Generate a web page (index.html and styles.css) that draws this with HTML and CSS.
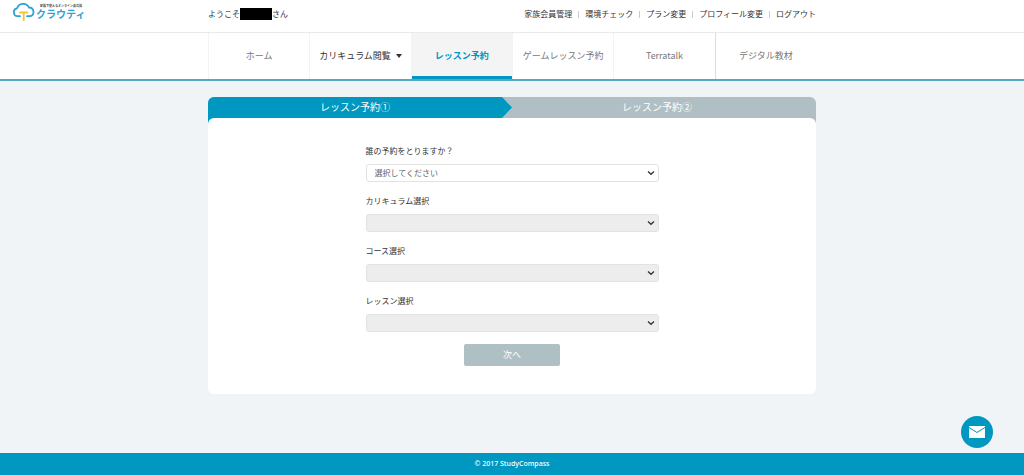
FILE: index.html
```html
<!DOCTYPE html>
<html lang="ja">
<head>
<meta charset="utf-8">
<meta name="viewport" content="width=device-width, initial-scale=1">
<title>レッスン予約 | クラウティ</title>
<link rel="stylesheet" href="styles.css">
</head>
<body>
<header class="header">
  <a class="logo" href="#">
    <svg class="logo-mark" viewBox="0 0 24 18" aria-hidden="true">
      <path d="M8 13.200H5.500A4 4 0 0 1 5 5.300A6.500 6.500 0 0 1 17 4.500A4.400 4.400 0 0 1 18 13.200H15" fill="none" stroke="#2ba3d4" stroke-width="1.800" stroke-linecap="round"/>
      <path d="M8 9.500H15.500M11.700 9.500V17" fill="none" stroke="#f3c530" stroke-width="1.800" stroke-linecap="round"/>
    </svg>
    <span class="logo-text">
      <span class="logo-tagline">家族で使えるオンライン英会話</span>
      <span class="logo-name">クラウティ</span>
    </span>
  </a>
  <div class="header-main">
    <p class="welcome">ようこそ<span class="masked"></span>さん</p>
    <ul class="links">
      <li><a href="#">家族会員管理</a></li>
      <li><a href="#">環境チェック</a></li>
      <li><a href="#">プラン変更</a></li>
      <li><a href="#">プロフィール変更</a></li>
      <li><a href="#">ログアウト</a></li>
    </ul>
  </div>
</header>
<nav class="nav">
  <ul class="nav-list">
    <li><a href="#">ホーム</a></li>
    <li><a class="has-menu" href="#">カリキュラム閲覧<span class="caret"></span></a></li>
    <li><a class="active" href="#">レッスン予約</a></li>
    <li><a href="#">ゲームレッスン予約</a></li>
    <li><a href="#">Terratalk</a></li>
    <li class="ruled"><a href="#">デジタル教材</a></li>
  </ul>
</nav>
<main class="main">
  <ol class="steps">
    <li class="step current">レッスン予約①</li>
    <li class="step">レッスン予約②</li>
  </ol>
  <form class="card">
    <div class="field">
      <label for="member">誰の予約をとりますか？</label>
      <div class="select">
        <select id="member"><option>選択してください</option></select>
        <svg class="chevron" viewBox="0 0 8 6" aria-hidden="true"><path d="M1 1.500L4 4.300L7 1.500"/></svg>
      </div>
    </div>
    <div class="field">
      <label for="curriculum">カリキュラム選択</label>
      <div class="select">
        <select id="curriculum" disabled></select>
        <svg class="chevron" viewBox="0 0 8 6" aria-hidden="true"><path d="M1 1.500L4 4.300L7 1.500"/></svg>
      </div>
    </div>
    <div class="field">
      <label for="course">コース選択</label>
      <div class="select">
        <select id="course" disabled></select>
        <svg class="chevron" viewBox="0 0 8 6" aria-hidden="true"><path d="M1 1.500L4 4.300L7 1.500"/></svg>
      </div>
    </div>
    <div class="field">
      <label for="lesson">レッスン選択</label>
      <div class="select">
        <select id="lesson" disabled></select>
        <svg class="chevron" viewBox="0 0 8 6" aria-hidden="true"><path d="M1 1.500L4 4.300L7 1.500"/></svg>
      </div>
    </div>
    <button class="next" type="button">次へ</button>
  </form>
</main>
<footer class="footer">© 2017 StudyCompass</footer>
<button class="mail" type="button" aria-label="お問い合わせ">
  <svg viewBox="0 0 16 12" aria-hidden="true">
    <path d="M0 0H16V12H0Z" fill="#fff"/>
    <path d="M0 1.500L8 6.500L16 1.500" fill="none" stroke="#0097c0" stroke-width="1"/>
  </svg>
</button>
</body>
</html>
```
FILE: styles.css
```css
* {
  box-sizing: border-box;
}

body {
  display: flex;
  flex-direction: column;
  min-height: 100vh;
  margin: 0;
  background: #f1f4f6;
  color: #333;
  font-family: "Noto Sans CJK JP", sans-serif;
  font-size: 8px;
  line-height: 12px;
}

a {
  color: inherit;
  text-decoration: none;
}

ul,
ol,
p {
  margin: 0;
  padding: 0;
  list-style: none;
}

.header {
  display: grid;
  grid-template-columns: 1fr minmax(0, 608px) 1fr;
  min-height: 32px;
  background: #fff;
}

.logo {
  display: flex;
  align-items: flex-start;
  padding: 3px 0 0 12px;
}

.logo-mark {
  width: 24px;
  height: 18px;
}

.logo-text {
  display: flex;
  flex-direction: column;
  padding-top: 1px;
  white-space: nowrap;
}

.logo-tagline {
  padding-left: 4px;
  color: #444;
  font-size: 3px;
  font-weight: 700;
  line-height: 4px;
}

.logo-name {
  color: #2ba3d4;
  font-size: 10px;
  font-weight: 700;
  line-height: 12px;
}

.header-main {
  display: flex;
  align-items: center;
  justify-content: space-between;
  padding-bottom: 4px;
}

.welcome {
  display: flex;
  align-items: center;
}

.masked {
  width: 32px;
  height: 12px;
  background: #000;
}

.links {
  display: flex;
}

.links li + li {
  display: flex;
  align-items: center;
}

.links li + li::before {
  width: 1px;
  height: 7px;
  margin: 0 6px;
  background: #ccc;
  content: "";
}

.nav {
  border-top: 1px solid #eaeaea;
  border-bottom: 2px solid #4fabc6;
  background: #fff;
}

.nav-list {
  display: grid;
  grid-template-columns: repeat(6, 1fr);
  max-width: 608px;
  margin: 0 auto;
  color: #777;
  font-size: 9px;
}

.nav-list li {
  border-left: 1px solid #f3f3f3;
}

.nav-list .ruled {
  border-left-color: #ddd;
}

.nav-list a {
  display: flex;
  align-items: center;
  justify-content: center;
  height: 46px;
  white-space: nowrap;
}

.nav-list .has-menu {
  gap: 5px;
  color: #333;
}

.caret {
  border: 3px solid transparent;
  border-top: 4px solid #333;
  border-bottom: 0;
}

.nav-list .active {
  padding-top: 3px;
  border-bottom: 3px solid #0097c0;
  background: #f4f4f5;
  color: #0097c0;
  font-weight: 700;
}

.main {
  flex: 1;
  width: 100%;
  max-width: 608px;
  margin: 0 auto;
  padding: 16px 0 56px;
}

.steps {
  display: grid;
  grid-template-columns: 1fr 1fr;
  overflow: hidden;
  margin-bottom: -6px;
  border-radius: 6px 6px 0 0;
  background: #b0bfc3;
  color: #fff;
  font-size: 10px;
  line-height: 20px;
  text-align: center;
}

.step {
  padding: 0 14px 7px 0;
}

.current {
  position: relative;
  padding-right: 10px;
  background: #0097c0;
}

.current::after {
  position: absolute;
  top: 0;
  right: 0;
  width: 10px;
  height: 21px;
  background: #b0bfc3;
  clip-path: polygon(0 0, 100% 0, 100% 50%, 0 100%, 100% 100%, 100% 50%);
  content: "";
}

.card {
  position: relative;
  display: flex;
  flex-direction: column;
  align-items: center;
  padding: 27px 16px 28px;
  border-radius: 6px;
  background: #fff;
}

.field {
  width: 100%;
  max-width: 293px;
  margin-bottom: 12px;
}

.field label {
  display: block;
  margin-bottom: 7px;
}

.field + .field {
  padding-top: 1px;
}

.select {
  display: grid;
  align-items: center;
}

.select select,
.chevron {
  grid-area: 1 / 1;
}

.select select {
  width: 100%;
  height: 18px;
  padding: 0 20px 0 8px;
  border: 1px solid #e2e2e2;
  border-radius: 3px;
  appearance: none;
  background: #fff;
  color: #666;
  font: inherit;
}

.select select:disabled {
  background: #ededed;
  opacity: 1;
}

.chevron {
  justify-self: end;
  width: 8px;
  height: 6px;
  margin-right: 4px;
  fill: none;
  pointer-events: none;
  stroke: #333;
  stroke-width: 1.3;
}

.next {
  width: 96px;
  height: 22px;
  padding: 0;
  border: 0;
  border-radius: 2px;
  background: #afc0c4;
  color: #fff;
  font: inherit;
  font-size: 9px;
}

.footer {
  padding: 5px 0;
  background: #0097c0;
  color: #fff;
  font-family: "Noto Sans", sans-serif;
  font-size: 7px;
  font-weight: 500;
  text-align: center;
}

.mail {
  position: fixed;
  right: 31px;
  bottom: 27px;
  display: grid;
  place-items: center;
  width: 32px;
  height: 32px;
  padding: 0;
  border: 0;
  border-radius: 50%;
  background: #0097c0;
}

.mail svg {
  width: 16px;
  height: 12px;
}
```
